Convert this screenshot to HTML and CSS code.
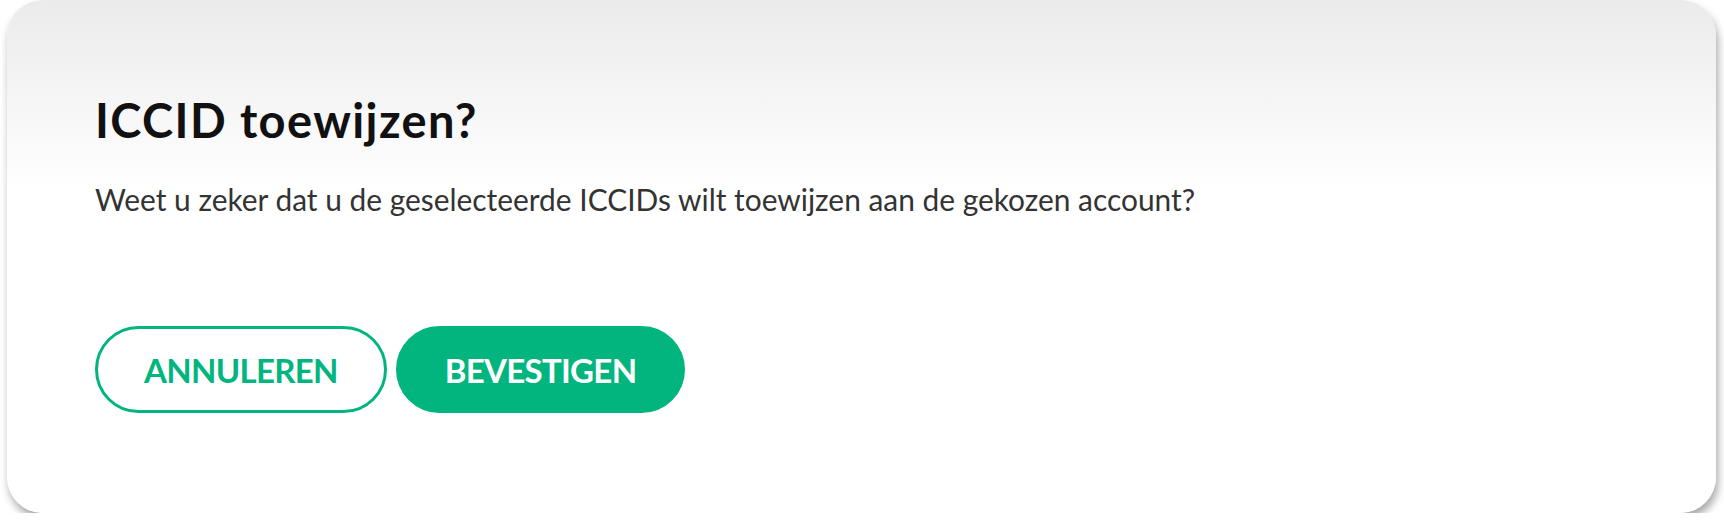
FILE: index.html
```html
<!DOCTYPE html>
<html>
<head>
    <title>ICCID toewijzen</title>
    <link rel="stylesheet" href="styles.css">
</head>
<body>
    <div class="dialog">
        <h1 class="dialog-title">ICCID toewijzen?</h1>
        <p class="dialog-text">Weet u zeker dat u de geselecteerde ICCIDs wilt toewijzen aan de gekozen account?</p>
        <div class="button-row">
            <button type="button" class="btn btn-outline">Annuleren</button>
            <button type="button" class="btn btn-primary">Bevestigen</button>
        </div>
    </div>
</body>
</html>
```

FILE: styles.css
```css
body {
    margin: 0;
    padding: 0 8px 0 7px;
    background-color: #fff;
    font-family: Lato, "Liberation Sans", sans-serif;
}

.dialog {
    box-sizing: border-box;
    height: 513px;
    padding: 92px 88px 0 88px;
    border-radius: 36px;
    background: linear-gradient(#ebebeb 0, #fff 190px);
    box-shadow: 2px 6px 8px rgba(0, 0, 0, 0.35);
}

.dialog-title {
    margin: 0;
    font-size: 47px;
    line-height: 1.2;
    font-weight: 700;
    letter-spacing: 1.4px;
    color: #111;
}

.dialog-text {
    margin: 34px 0 0 0;
    font-size: 29.9px;
    line-height: 1.2;
    color: #333;
}

.button-row {
    display: flex;
    gap: 9px;
    margin-top: 108px;
}

.btn {
    box-sizing: border-box;
    height: 87px;
    padding: 0 46px;
    border: 3px solid #02b57f;
    border-radius: 44px;
    font-family: Lato, "Liberation Sans", sans-serif;
    font-size: 33px;
    font-weight: 700;
    letter-spacing: -0.7px;
    text-transform: uppercase;
    cursor: pointer;
}

.btn-outline {
    background-color: #fff;
    color: #02b57f;
}

.btn-primary {
    background-color: #02b57f;
    color: #fff;
}
```
